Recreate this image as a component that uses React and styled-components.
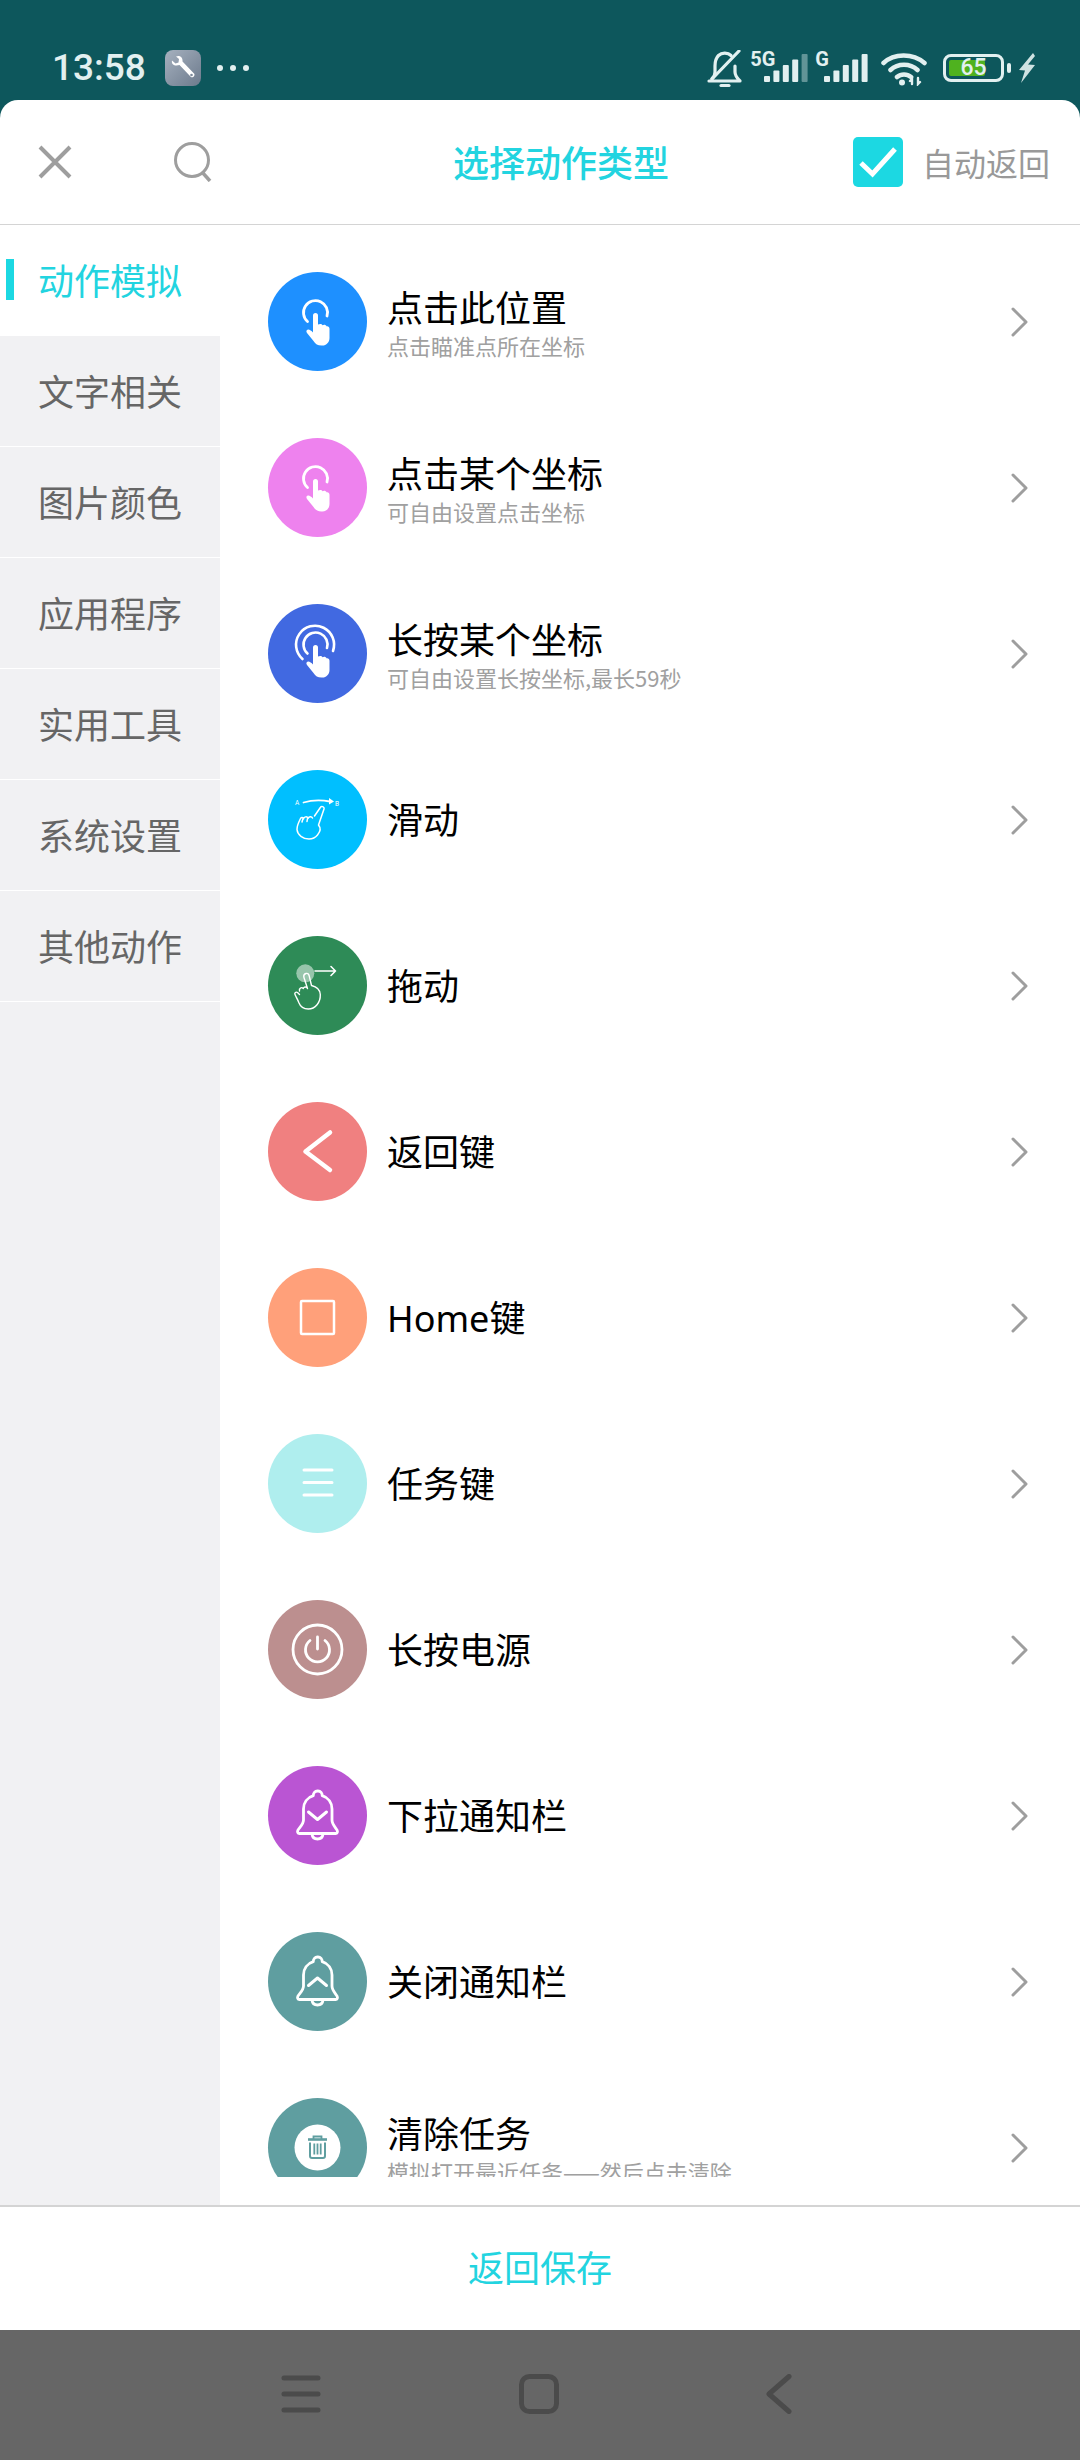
import React from "react";
import styled, { createGlobalStyle } from "styled-components";

const FONT = `"Noto Sans", "Noto Sans CJK SC", sans-serif`;
const CJK = `"Noto Sans CJK SC", sans-serif`;
const ACCENT = "#22d4e0";

const Global = createGlobalStyle`
  html, body { margin: 0; padding: 0; background: #0d575c; }
  * { box-sizing: border-box; }
`;

const Page = styled.div`
  width: 1080px;
  height: 2460px;
  display: flex;
  flex-direction: column;
  overflow: hidden;
  background: #0d575c;
  font-family: ${FONT};
`;

const StatusBar = styled.div`
  height: 100px;
  flex: none;
  display: flex;
  align-items: flex-start;
  padding: 50px 44px 0 52px;
  color: #e2f0f0;
`;
const Time = styled.div`
  font: 500 37px/36px Roboto, sans-serif;
  width: 113px;
`;
const AppBadge = styled.div`
  width: 36px;
  height: 36px;
  border-radius: 8px;
  background: linear-gradient(135deg, #a6b1bf, #6c7a8c);
  display: flex;
  align-items: center;
  justify-content: center;
`;
const Dots = styled.div`
  display: flex;
  gap: 7px;
  margin: 15px 0 0 16px;
  span { width: 6px; height: 6px; border-radius: 50%; background: #e2f0f0; }
`;
const StatusRight = styled.div`
  margin-left: auto;
  display: flex;
  align-items: flex-start;
`;
const NetLabel = styled.span`
  font: 700 ${(p) => p.$size}px/16px Roboto, sans-serif;
  margin: 1px ${(p) => p.$after}px 0 ${(p) => p.$before}px;
`;
const Bars = styled.div`
  margin-top: 4px;
  flex: none;
  svg { display: block; }
`;
const Wifi = styled.svg`
  margin: 2px 0 0 13px;
  flex: none;
`;
const Battery = styled.div`
  position: relative;
  width: 61px;
  height: 28px;
  margin: 4px 0 0 16px;
  border: 3px solid #e2f0f0;
  border-radius: 8px;
  display: flex;
  align-items: center;
  justify-content: center;
  font: 500 23px/22px Roboto, sans-serif;
  span { position: relative; }
  &::before {
    content: "";
    position: absolute;
    left: 3px;
    top: 3px;
    bottom: 3px;
    width: 36px;
    background: #4fb21f;
    border-radius: 2px;
  }
`;
const BatteryNub = styled.div`
  width: 4px;
  height: 10px;
  margin: 13px 7px 0 3px;
  border-radius: 2px;
  background: #e2f0f0;
`;
const Bolt = styled.svg`
  margin-top: 3px;
  flex: none;
`;

const Sheet = styled.div`
  flex: 1;
  min-height: 0;
  background: #fff;
  border-radius: 18px 18px 0 0;
  display: flex;
  flex-direction: column;
  overflow: hidden;
`;
const Header = styled.header`
  height: 125px;
  flex: none;
  display: flex;
  align-items: center;
  border-bottom: 1px solid #d4d4d4;
  padding: 0 30px 0 38px;
`;
const HeaderIcon = styled.svg`
  flex: none;
  display: block;
  margin-right: ${(p) => p.$after}px;
`;
const Title = styled.h1`
  margin: 0 0 2px;
  font: 500 36px/50px ${CJK};
  color: ${ACCENT};
  width: 216px;
  white-space: nowrap;
`;
const AutoReturn = styled.label`
  margin-left: auto;
  display: flex;
  align-items: center;
  gap: 19px;
  font: 400 32px/44px ${CJK};
  color: #999;
`;
const CheckBox = styled.span`
  width: 50px;
  height: 50px;
  border-radius: 5px;
  background: #1cd8e2;
  display: flex;
  align-items: center;
  justify-content: center;
`;

const Body = styled.div`
  flex: 1;
  min-height: 0;
  display: flex;
`;
const Sidebar = styled.nav`
  width: 220px;
  flex: none;
  background: #f1f1f3;
`;
const SideItem = styled.div`
  position: relative;
  height: 111px;
  padding: 0 0 3px 38px;
  display: flex;
  align-items: center;
  font: 400 36px/48px ${CJK};
  white-space: nowrap;
  color: ${(p) => (p.$active ? ACCENT : "#666")};
  background: ${(p) => (p.$active ? "#fff" : "transparent")};
  border-bottom: ${(p) => (p.$active ? "0" : "1px solid #fff")};
  ${(p) =>
    p.$active &&
    `&::before {
      content: "";
      position: absolute;
      left: 6px;
      top: 34px;
      width: 8px;
      height: 41px;
      background: #1cd8e2;
    }`}
`;
const ListPane = styled.div`
  flex: 1;
  min-width: 0;
  padding-bottom: 28px;
  background: #fff;
`;
const ListViewport = styled.div`
  height: 100%;
  overflow: hidden;
  padding-top: 13px;
`;
const Row = styled.div`
  height: 166px;
  display: flex;
  align-items: center;
  padding: 0 52px 0 48px;
`;
const Circle = styled.div`
  width: 99px;
  height: 99px;
  flex: none;
  border-radius: 50%;
  background: ${(p) => p.$bg};
  svg { display: block; }
`;
const RowText = styled.div`
  flex: 1;
  min-width: 0;
  margin-left: 20px;
  padding-top: 3px;
`;
const RowTitle = styled.div`
  font: 400 36px/46px ${FONT};
  color: #000;
  white-space: nowrap;
`;
const RowSub = styled.div`
  margin-top: -2px;
  font: 400 22px/30px ${CJK};
  color: #a0a0a0;
  white-space: nowrap;
`;
const Chevron = styled.svg`
  flex: none;
  margin-top: 2px;
`;
const Footer = styled.footer`
  height: 125px;
  flex: none;
  border-top: 2px solid #d4d4d4;
  padding-bottom: 5px;
  display: flex;
  align-items: center;
  justify-content: center;
  font: 400 36px/50px ${CJK};
  color: ${ACCENT};
  background: #fff;
`;
const NavBar = styled.div`
  height: 130px;
  flex: none;
  background: #666;
  display: flex;
  align-items: center;
  justify-content: center;
  padding: 0 8px 2px 0;
`;
const NavIcon = styled.svg`
  display: block;
  margin-left: ${(p) => p.$before}px;
`;

const W = "#fff";
const Hand = () => (
  <path
    fill={W}
    d="M45 43.500a2.500 2.500 0 0 1 5 0V52.500c2-1 4-.5 4.500.8 1.500-1 3.500-.5 4 1 1.500-.5 3 .5 3 2.500V66c0 4.500-3.500 8-8 7.500-4 0-6-1.500-8-4.500L39 61c-1.200-1.800-.5-3.400 1-3.600 1.500-.2 3.500 1.300 5 3Z"
  />
);
const Ic = ({ children }) => (
  <svg width="99" height="99" viewBox="0 0 99 99" fill="none" stroke={W} strokeLinecap="round" strokeLinejoin="round">
    {children}
  </svg>
);
const TapIcon = () => (
  <Ic>
    <path d="M39.500 49.500A12 12 0 1 1 59 44" strokeWidth="2.800" />
    <g stroke="none"><Hand /></g>
  </Ic>
);
const LongPressIcon = () => (
  <Ic>
    <path d="M39.500 49.500A12 12 0 1 1 59 44" strokeWidth="2.600" />
    <path d="M34.500 55A19 19 0 1 1 65 47" strokeWidth="2.600" />
    <g stroke="none"><Hand /></g>
  </Ic>
);
const SwipeIcon = () => (
  <Ic>
    <path d="M35.500 32.500C44 30 54 30 62 31.500" strokeWidth="1.800" />
    <path d="M61 28 66 31.500 61 34.500Z" fill={W} stroke="none" />
    <text x="27" y="35" fontSize="6.500" fill={W} stroke="none" fontFamily="Roboto">A</text>
    <text x="67" y="36" fontSize="6.500" fill={W} stroke="none" fontFamily="Roboto">B</text>
    <path
      d="M46.500 46 52 38c1-2.500 4.500-1.500 4 1L50.500 55c2.500 3 1.500 7-1 10-2 2.500-5 4-8.500 4-6 0-11.500-4-12-9.500-.2-3.500 2-8 3.500-11 .8-1.500 3-1.200 3 .5.300-2.500 3.800-3 4.500-.5.500-2 3.600-2.500 4.500-.5M35 48.500l-1 3.500M39.500 48.500l-.5 3"
      strokeWidth="1.500"
    />
  </Ic>
);
const DragIcon = () => (
  <Ic>
    <circle cx="37.300" cy="37.300" r="9" fill="rgba(255,255,255,.5)" stroke="none" />
    <path d="M47 35H67.500M63 30.500l4.500 4.500-4.500 4.500" strokeWidth="1.600" />
    <path
      d="M35.800 41c-.6-4 4.600-5 5.400-1.200L43.500 49.500c4 1 8.500 3.500 8.800 9 .3 8-5 14.500-12 14.500-4.500 0-8-2.500-9.500-6.500-.8-2.500-2.500-5-3.800-8-.8-1.800 1-3 2.500-2l2 2M31.500 55c-.8-2.500 2-4.500 3.800-2.500M35.300 52.500c.3-1.800 3-2 4-.5M35.800 41 39.500 52.500"
      strokeWidth="1.400"
    />
  </Ic>
);
const BackIcon = () => (
  <Ic>
    <path d="M62 30.500 37.500 49.500 62 68" strokeWidth="4.500" />
  </Ic>
);
const HomeIcon = () => (
  <Ic>
    <rect x="33" y="33" width="33" height="33" rx="1" strokeWidth="2.500" />
  </Ic>
);
const TasksIcon = () => (
  <Ic>
    <path d="M36 36H64M36 48.500H64M36 61H64" strokeWidth="3" />
  </Ic>
);
const PowerIcon = () => (
  <Ic>
    <circle cx="49.500" cy="49.500" r="24.500" strokeWidth="2.800" />
    <path d="M42 40.500a12 12 0 1 0 15 0M49.500 37V49" strokeWidth="2.800" />
  </Ic>
);
const Bell = () => (
  <path
    d="M49.500 25c-2.600 0-4.300 2-4.200 4.600C39 31.500 35.500 37 35.500 43v11c0 4-3.500 7-5.500 10-1 1.800-.3 3.500 1.500 3.500h36c1.800 0 2.500-1.700 1.500-3.500-2-3-5-6-5-10V43c0-6-3.500-11.500-9.800-13.400.1-2.600-1.600-4.600-4.200-4.600ZM44 68c.3 3 2.500 5 5.500 5s5.200-2 5.500-5"
    strokeWidth="2.800"
  />
);
const BellDownIcon = () => (
  <Ic>
    <Bell />
    <path d="M40.500 46 49.500 53.500 58.500 46" strokeWidth="3" />
  </Ic>
);
const BellUpIcon = () => (
  <Ic>
    <Bell />
    <path d="M40.500 53.500 49.500 46 58.500 53.500" strokeWidth="3" />
  </Ic>
);
const TrashIcon = () => (
  <Ic>
    <circle cx="49.500" cy="49.500" r="23" fill={W} stroke="none" />
    <g stroke="#5f9ea0" strokeLinejoin="miter" strokeLinecap="butt">
      <path d="M45.500 41v-2.500h8V41" strokeWidth="1.800" />
      <path d="M40 41.500H59" strokeWidth="2.600" />
      <path d="M42 44.500V58c0 1.200.8 2 2 2H55c1.200 0 2-.8 2-2V44.500" strokeWidth="2" />
      <path d="M46.300 45.500V56.500M49.500 45.500V56.500M52.700 45.500V56.500" strokeWidth="1.800" />
    </g>
  </Ic>
);

const rows = [
  { bg: "#1e90ff", icon: <TapIcon />, title: "点击此位置", sub: "点击瞄准点所在坐标" },
  { bg: "#ee82ee", icon: <TapIcon />, title: "点击某个坐标", sub: "可自由设置点击坐标" },
  { bg: "#4169e1", icon: <LongPressIcon />, title: "长按某个坐标", sub: "可自由设置长按坐标,最长59秒" },
  { bg: "#00bfff", icon: <SwipeIcon />, title: "滑动" },
  { bg: "#2e8b57", icon: <DragIcon />, title: "拖动" },
  { bg: "#f08080", icon: <BackIcon />, title: "返回键" },
  { bg: "#ffa07a", icon: <HomeIcon />, title: "Home键" },
  { bg: "#afeeee", icon: <TasksIcon />, title: "任务键" },
  { bg: "#bc8f8f", icon: <PowerIcon />, title: "长按电源" },
  { bg: "#ba55d3", icon: <BellDownIcon />, title: "下拉通知栏" },
  { bg: "#5f9ea0", icon: <BellUpIcon />, title: "关闭通知栏" },
  { bg: "#5f9ea0", icon: <TrashIcon />, title: "清除任务", sub: "模拟打开最近任务——然后点击清除" },
];
const categories = ["动作模拟", "文字相关", "图片颜色", "应用程序", "实用工具", "系统设置", "其他动作"];

const SignalBars = ({ faded }) => (
  <svg width="44" height="28" viewBox="0 0 44 28">
    {[0, 1, 2, 3, 4].map((i) => {
      const h = 6 + i * 5.5;
      return (
        <rect
          key={i}
          x={i * 9.400}
          y={28 - h}
          width="6"
          height={h}
          rx="1"
          fill="#e2f0f0"
          opacity={faded && i === 4 ? 0.4 : 1}
        />
      );
    })}
  </svg>
);

export default function App() {
  return (
    <Page>
      <Global />
      <StatusBar>
        <Time>13:58</Time>
        <AppBadge>
          <svg width="28" height="28" viewBox="0 0 28 28">
            <path
              d="M3 6.500 6.500 9.500 9.500 8.500 10 5 7 2.500C10.500 .8 14 3 13.500 7.500L25 19.500c1.800 2 -1.500 5-3.300 3.200L10.500 11C6 12.500 2 10.500 3 6.500Z"
              fill="#fff"
            />
            <circle cx="22.500" cy="21" r="1.300" fill="#7d8a9b" />
          </svg>
        </AppBadge>
        <Dots><span /><span /><span /></Dots>
        <StatusRight>
          <svg width="36" height="38" viewBox="0 0 36 38" fill="none" stroke="#e2f0f0" strokeWidth="3.200" strokeLinecap="round" strokeLinejoin="round">
            <path d="M2 31h31c-3-3-5-5-5-9v-6M24 5.500C21 2.500 15 2 11.500 5.500 8.500 8.500 8 12 8 16v6c0 3-1 5-3 6.500" />
            <path d="M32 1 5 29" />
            <path d="M14 35.500h8" />
          </svg>
          <NetLabel $size={20} $before={7} $after={-11}>5G</NetLabel>
          <Bars><SignalBars faded /></Bars>
          <NetLabel $size={20} $before={7} $after={-5}>G</NetLabel>
          <Bars><SignalBars /></Bars>
          <Wifi width="46" height="34" viewBox="0 0 46 34" fill="none" stroke="#e2f0f0" strokeWidth="4.500" strokeLinecap="round">
            <path d="M2.500 11C13 1 32 1 43.500 11M9.500 18C17 11 29 11 36.500 18M16 25C20 21.500 26 21.500 30 25" />
            <circle cx="21" cy="30.500" r="3" fill="#e2f0f0" stroke="none" />
            <path d="M31 32v-5l-2 2M37 26v6l2-2" strokeWidth="2.400" />
          </Wifi>
          <Battery><span>65</span></Battery>
          <BatteryNub />
          <Bolt width="18" height="30" viewBox="0 0 18 30">
            <path d="M15 0 1 17l6 .5L3 30l14-18-7-.5L17 3Z" fill="#cfe2e2" />
          </Bolt>
        </StatusRight>
      </StatusBar>

      <Sheet>
        <Header>
          <HeaderIcon $after={102} width="34" height="34" viewBox="0 0 34 34" fill="none" stroke="#9e9e9e" strokeWidth="4">
            <path d="M2 2 32 32M32 2 2 32" />
          </HeaderIcon>
          <HeaderIcon $after={241} width="38" height="40" viewBox="0 0 38 40" fill="none" stroke="#9e9e9e" strokeWidth="3">
            <circle cx="18" cy="18" r="16.500" />
            <path d="M28 30 36 39" strokeWidth="3.500" />
          </HeaderIcon>
          <Title>选择动作类型</Title>
          <AutoReturn>
            <CheckBox>
              <svg width="38" height="32" viewBox="0 0 38 32" fill="none" stroke="#fff" strokeWidth="5">
                <path d="M2 17 13.500 28 36 3" />
              </svg>
            </CheckBox>
            自动返回
          </AutoReturn>
        </Header>
        <Body>
          <Sidebar>
            {categories.map((c, i) => (
              <SideItem key={c} $active={i === 0}>{c}</SideItem>
            ))}
          </Sidebar>
          <ListPane>
            <ListViewport>
              {rows.map((r) => (
                <Row key={r.title}>
                  <Circle $bg={r.bg}>{r.icon}</Circle>
                  <RowText>
                    <RowTitle>{r.title}</RowTitle>
                    {r.sub && <RowSub>{r.sub}</RowSub>}
                  </RowText>
                  <Chevron width="17" height="30" viewBox="0 0 17 30" fill="none" stroke="#9e9e9e" strokeWidth="3" strokeLinecap="round" strokeLinejoin="round">
                    <path d="M2 2 15 15 2 28" />
                  </Chevron>
                </Row>
              ))}
            </ListViewport>
          </ListPane>
        </Body>
        <Footer>返回保存</Footer>
      </Sheet>

      <NavBar>
        <NavIcon $before={0} width="40" height="40" viewBox="0 0 40 40" fill="none" stroke="#4b4b4b" strokeWidth="5" strokeLinecap="round">
          <path d="M3 4H37M3 20H37M3 36H37" />
        </NavIcon>
        <NavIcon $before={198} width="40" height="40" viewBox="0 0 40 40" fill="none" stroke="#4b4b4b" strokeWidth="5">
          <rect x="2.500" y="2.500" width="35" height="35" rx="8" />
        </NavIcon>
        <NavIcon $before={207} width="26" height="40" viewBox="0 0 26 40" fill="none" stroke="#4b4b4b" strokeWidth="5" strokeLinecap="round" strokeLinejoin="round">
          <path d="M23 2.500 3 20 23 37.500" />
        </NavIcon>
      </NavBar>
    </Page>
  );
}
